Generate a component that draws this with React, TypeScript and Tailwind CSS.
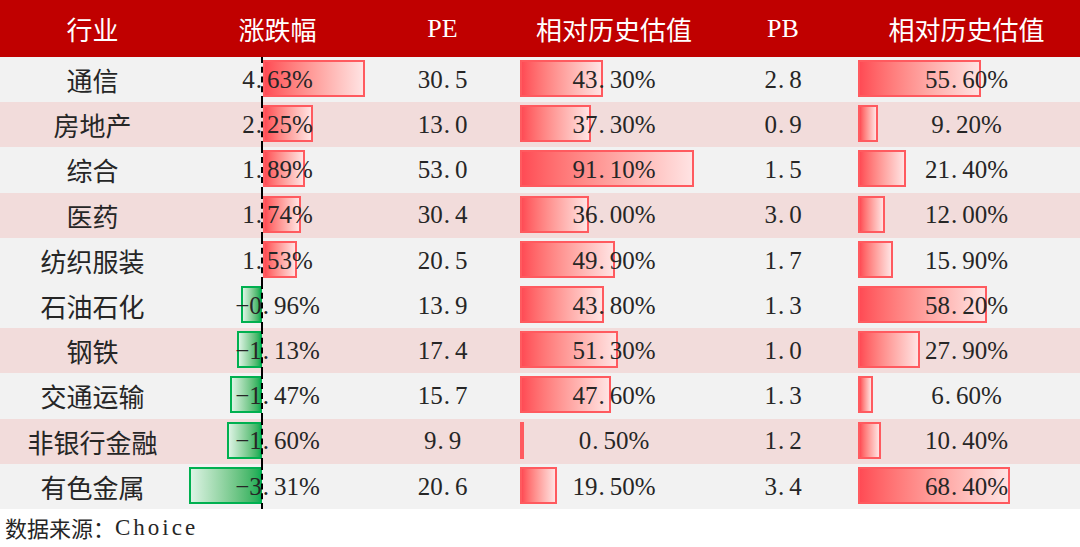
type Row = {
  name: string;
  change: number;
  pe: string;
  peRel: number;
  pb: string;
  pbRel: number;
  pink?: boolean;
};

const rows: Row[] = [
  { name: "通信", change: 4.63, pe: "30.5", peRel: 43.3, pb: "2.8", pbRel: 55.6 },
  { name: "房地产", change: 2.25, pe: "13.0", peRel: 37.3, pb: "0.9", pbRel: 9.2, pink: true },
  { name: "综合", change: 1.89, pe: "53.0", peRel: 91.1, pb: "1.5", pbRel: 21.4 },
  { name: "医药", change: 1.74, pe: "30.4", peRel: 36.0, pb: "3.0", pbRel: 12.0, pink: true },
  { name: "纺织服装", change: 1.53, pe: "20.5", peRel: 49.9, pb: "1.7", pbRel: 15.9 },
  { name: "石油石化", change: -0.96, pe: "13.9", peRel: 43.8, pb: "1.3", pbRel: 58.2 },
  { name: "钢铁", change: -1.13, pe: "17.4", peRel: 51.3, pb: "1.0", pbRel: 27.9, pink: true },
  { name: "交通运输", change: -1.47, pe: "15.7", peRel: 47.6, pb: "1.3", pbRel: 6.6 },
  { name: "非银行金融", change: -1.6, pe: "9.9", peRel: 0.5, pb: "1.2", pbRel: 10.4, pink: true },
  { name: "有色金属", change: -3.31, pe: "20.6", peRel: 19.5, pb: "3.4", pbRel: 68.4 },
];

const cjk = "font-['Noto_Sans_CJK_SC',sans-serif]";
const num = "font-['Liberation_Serif','Noto_Sans_CJK_SC',serif] text-[25px] text-[#262626]";
const cols = "grid grid-cols-[185px_185px_145px_198px_140px_227px]";

// SimSun-style numbers: the decimal point sits left in a full half-width cell
function Num({ text }: { text: string }) {
  const [a, b] = text.replace("-", "\u2212").split(".");
  return (
    <span className={`relative ${num}`}>
      {a}
      <span className="ml-[1px] mr-[5px]">.</span>
      {b}
    </span>
  );
}

function RedBar({ value, scale }: { value: number; scale: number }) {
  return (
    <div
      className="absolute left-[5px] top-[3px] h-[37px] border-2 border-[#ff5a5f] bg-gradient-to-r from-[#ff4b55] to-[#ffe3e3]"
      style={{ width: Math.max(3, value * scale) }}
    />
  );
}

export default function App() {
  return (
    <div className="w-[1080px] h-[547px] bg-white overflow-hidden">
      <div className={`${cols} h-[57px] bg-[#c00000] text-white text-[26px] ${cjk}`}>
        <div className="flex items-center justify-center">行业</div>
        <div className="flex items-center justify-center">涨跌幅</div>
        <div className="flex items-center justify-center font-['Liberation_Serif',serif]">PE</div>
        <div className="flex items-center justify-center">相对历史估值</div>
        <div className="flex items-center justify-center font-['Liberation_Serif',serif]">PB</div>
        <div className="flex items-center justify-center">相对历史估值</div>
      </div>

      {rows.map((r) => (
        <div key={r.name} className={`${cols} h-[45.2px] ${r.pink ? "bg-[#f2dcdb]" : "bg-[#f2f2f2]"}`}>
          <div className={`flex items-center justify-center text-[26px] text-[#262626] ${cjk}`}>{r.name}</div>

          <div className="relative flex items-center justify-center">
            {r.change >= 0 ? (
              <div
                className="absolute left-[78px] top-[3px] h-[37px] border-2 border-[#ff5a5f] bg-gradient-to-r from-[#ff4b55] to-[#ffe3e3]"
                style={{ width: r.change * 22 }}
              />
            ) : (
              <div
                className="absolute top-[3px] h-[37px] border-2 border-[#00b050] bg-gradient-to-r from-[#dcf3e4] to-[#12ad55]"
                style={{ width: -r.change * 22, left: 77 + r.change * 22 }}
              />
            )}
            <Num text={`${r.change.toFixed(2)}%`} />
            <div className="absolute left-[76px] top-0 bottom-0 border-l-2 border-dashed border-black" />
          </div>

          <div className="flex items-center justify-center">
            <Num text={r.pe} />
          </div>

          <div className="relative flex items-center justify-center">
            <RedBar value={r.peRel} scale={1.91} />
            <Num text={`${r.peRel.toFixed(2)}%`} />
          </div>

          <div className="flex items-center justify-center">
            <Num text={r.pb} />
          </div>

          <div className="relative flex items-center justify-center">
            <RedBar value={r.pbRel} scale={2.22} />
            <Num text={`${r.pbRel.toFixed(2)}%`} />
          </div>
        </div>
      ))}

      <div className="flex items-center h-[38px] pl-[5px] text-[22px] text-[#262626]">
        <span className={cjk}>数据来源：</span>
        <span className="font-['Liberation_Serif',serif] text-[23px] tracking-[3px]">Choice</span>
      </div>
    </div>
  );
}
